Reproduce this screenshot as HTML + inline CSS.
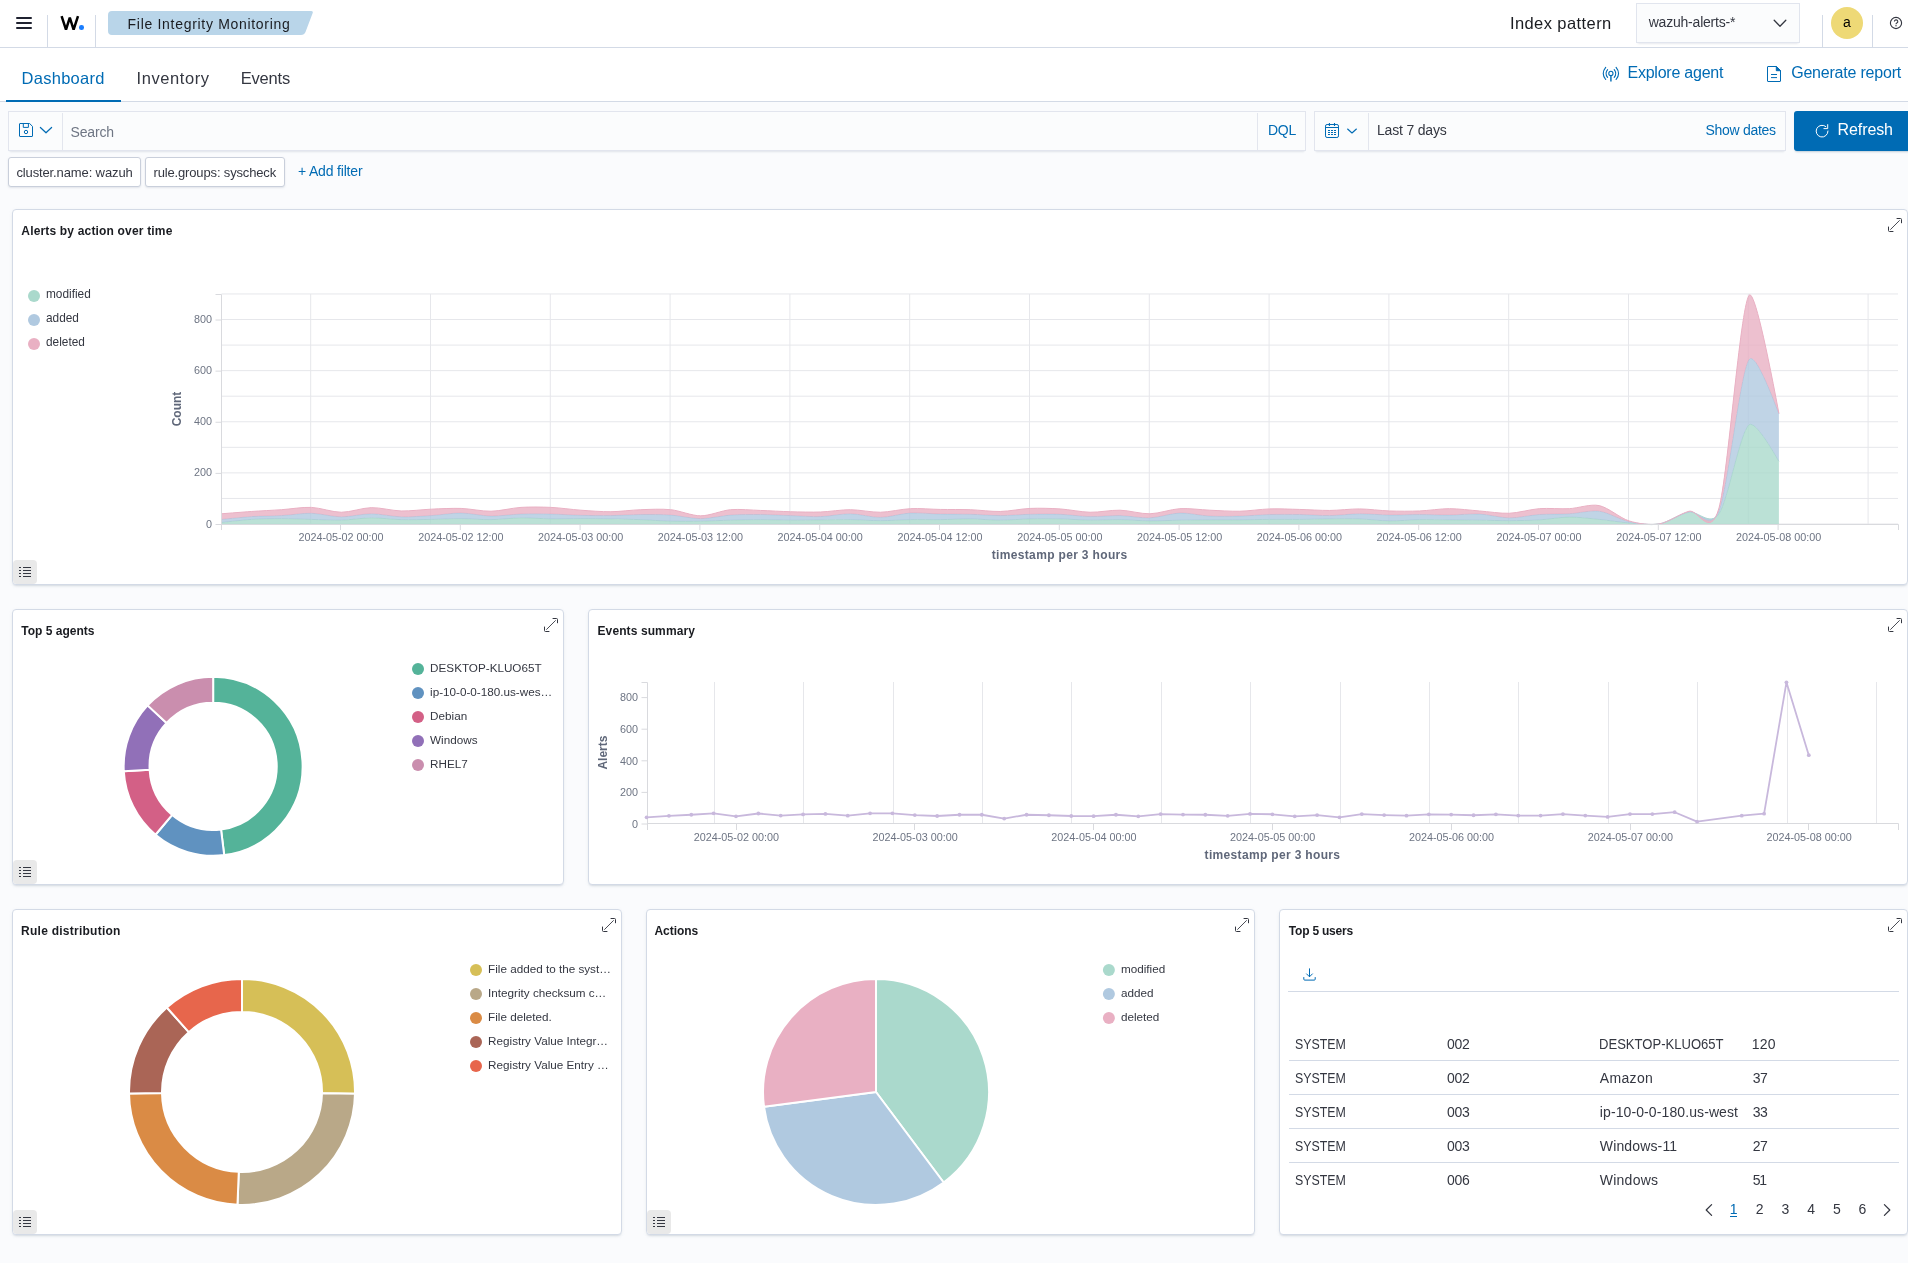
<!DOCTYPE html>
<html><head><meta charset="utf-8"><title>Wazuh</title><style>
*{box-sizing:border-box}
html,body{margin:0;padding:0}
body{width:1908px;height:1263px;overflow:hidden;background:#fafbfd;font-family:"Liberation Sans",sans-serif;position:relative}
#root{position:absolute;left:0;top:0;width:1908px;height:1263px;overflow:hidden;will-change:transform}
.t{position:absolute;line-height:20px;white-space:nowrap}
#hdr{position:absolute;left:0;top:0;width:1908px;height:48px;background:#fff;border-bottom:1px solid #d3dae6}
#tabs{position:absolute;left:0;top:48px;width:1908px;height:54px;background:#fff;border-bottom:1px solid #d3dae6}
.vl{position:absolute;width:1px;background:#d3dae6}
.vl2{position:absolute;width:1px;background:#e3e6ee}
.hl{position:absolute;height:1px;background:#d3dae6}
.fld{position:absolute;background:#fbfcfd;border:1px solid #e2e5ee;box-shadow:0 1px 1px -1px rgba(152,162,179,.2),0 3px 2px -2px rgba(152,162,179,.25)}
.pill{position:absolute;background:#fff;border:1px solid #c9cfdb;border-radius:3px;box-shadow:0 1px 2px rgba(152,162,179,.25)}
.pn{position:absolute;background:#fff;border:1px solid #d3dae6;border-radius:4px;box-shadow:0 2px 2px -1px rgba(152,162,179,.3),0 1px 5px -2px rgba(152,162,179,.3)}
</style></head><body>
<div id="root">
<div id="hdr"></div>
<div class="vl" style="left:47px;top:15px;height:32px"></div>
<div class="vl" style="left:95px;top:15px;height:32px"></div>
<div class="vl" style="left:1822px;top:15px;height:32px"></div>
<div class="vl" style="left:1872px;top:15px;height:32px"></div>
<div style="position:absolute;left:16px;top:17px;width:16px;height:2px;background:#1f2230;border-radius:1px"></div>
<div style="position:absolute;left:16px;top:22px;width:16px;height:2px;background:#1f2230;border-radius:1px"></div>
<div style="position:absolute;left:16px;top:27px;width:16px;height:2px;background:#1f2230;border-radius:1px"></div>
<svg style="position:absolute;left:59px;top:15px" width="22" height="16"><path d="M2.6,1.2 L7,14.6 L10.8,2.6 L14.6,14.6 L19,1.2" fill="none" stroke="#000" stroke-width="2.5" stroke-linejoin="miter" stroke-miterlimit="2"/></svg>
<div style="position:absolute;left:79.1px;top:25.4px;width:4.6px;height:4.6px;border-radius:50%;background:#1a7dfe"></div>
<svg style="position:absolute;left:108px;top:11px" width="206" height="24"><path d="M4,0 H203 Q205.5,0 204.6,2.2 L197.5,21 Q196.3,24 193,24 H4 Q0,24 0,20 V4 Q0,0 4,0 Z" fill="#b9d5e9"/></svg>
<div class="t" style="left:127.60px;top:14.00px;font-size:14px;font-weight:400;color:#1a1c21;letter-spacing:0.695px;">File Integrity Monitoring</div>
<div class="t" style="left:1509.90px;top:13.00px;font-size:16.5px;font-weight:400;color:#1a1c21;letter-spacing:0.422px;">Index pattern</div>
<div style="position:absolute;left:1636px;top:3px;width:164px;height:40px;box-sizing:border-box;background:#fbfcfd;border:1px solid #e1e5ee;box-shadow:0 1px 1px -1px rgba(152,162,179,.2),0 3px 2px -2px rgba(152,162,179,.2)"></div>
<div class="t" style="left:1648.70px;top:12.00px;font-size:14px;font-weight:400;color:#343741;letter-spacing:-0.210px;">wazuh-alerts-*</div>
<svg style="position:absolute;left:1772px;top:18px" width="16" height="11"><path d="M2.2,2.3 L8,8.2 L13.8,2.3" fill="none" stroke="#343741" stroke-width="1.3" stroke-linecap="round" stroke-linejoin="round"/></svg>
<div style="position:absolute;left:1830.8px;top:7px;width:32px;height:32px;border-radius:50%;background:#eed976"></div>
<div class="t" style="left:1843.10px;top:12.00px;font-size:14px;font-weight:400;color:#000;letter-spacing:-0.700px;">a</div>
<svg style="position:absolute;left:1888px;top:15px" width="16" height="16" viewBox="0 0 16 16"><circle cx="8" cy="8" r="5.6" fill="none" stroke="#343741" stroke-width="1.15"/><path d="M6.4,6.5 a1.7,1.7 0 1 1 2.4,1.6 q-.8,.4 -.8,1.1" fill="none" stroke="#343741" stroke-width="1.1"/><circle cx="8" cy="10.8" r=".7" fill="#343741"/></svg>
<div id="tabs"></div>
<div style="position:absolute;left:6px;top:100px;width:115px;height:2px;background:#006bb4"></div>
<div class="t" style="left:21.50px;top:68.00px;font-size:16.5px;font-weight:400;color:#006bb4;letter-spacing:0.282px;">Dashboard</div>
<div class="t" style="left:136.50px;top:68.00px;font-size:16.5px;font-weight:400;color:#343741;letter-spacing:0.573px;">Inventory</div>
<div class="t" style="left:240.70px;top:68.00px;font-size:16.5px;font-weight:400;color:#343741;letter-spacing:-0.179px;">Events</div>
<svg style="position:absolute;left:1602px;top:66px" width="18" height="17" viewBox="0 0 18 17" fill="none" stroke="#006bb4" stroke-width="1.1" stroke-linecap="round">
<circle cx="8.9" cy="7.4" r="2.1"/><path d="M8.9,9.6 V15.4" stroke-width="1.8" stroke-opacity=".8" stroke-linecap="butt"/>
<path d="M5.6,3.6 Q2.4,7.4 5.6,11.3"/><path d="M12.2,3.6 Q15.4,7.4 12.2,11.3"/>
<path d="M3.7,1.4 Q-1.2,7.4 3.7,13.5"/><path d="M14.1,1.4 Q19,7.4 14.1,13.5"/></svg>
<div class="t" style="left:1627.50px;top:63.00px;font-size:16px;font-weight:400;color:#006bb4;letter-spacing:-0.232px;">Explore agent</div>
<svg style="position:absolute;left:1767px;top:66px" width="14" height="16" viewBox="0 0 14 16" fill="none" stroke="#006bb4" stroke-width="1">
<path d="M1,.5 H9.3 L13.5,4.7 V15 a.5,.5 0 0 1 -.5,.5 H1 a.5,.5 0 0 1 -.5,-.5 V1 a.5,.5 0 0 1 .5,-.5 Z"/><path d="M9.3,.5 V4.7 H13.5 Z" fill="#006bb4"/><path d="M4,8.5 H10 M4,11.6 H10"/></svg>
<div class="t" style="left:1791.20px;top:63.00px;font-size:16px;font-weight:400;color:#006bb4;letter-spacing:-0.208px;">Generate report</div>
<div class="fld" style="left:8px;top:111px;width:1298px;height:40px"></div>
<div class="vl2" style="left:62px;top:113px;height:37px"></div>
<div class="vl2" style="left:1257px;top:113px;height:37px"></div>
<svg style="position:absolute;left:19px;top:123px" width="14" height="14" viewBox="0 0 14 14" fill="none" stroke="#006bb4" stroke-width="1">
<path d="M1,.5 H10.6 L13.5,3.4 V13 a.5,.5 0 0 1 -.5,.5 H1 a.5,.5 0 0 1 -.5,-.5 V1 a.5,.5 0 0 1 .5,-.5 Z"/><path d="M4.3,.5 V4.4 H9.4 V.5"/><circle cx="7" cy="9" r="1.7"/></svg>
<svg style="position:absolute;left:39px;top:125px" width="14" height="10"><path d="M1.4,2.5 L7,7.8 L12.6,2.5" fill="none" stroke="#006bb4" stroke-width="1.2" stroke-linecap="round" stroke-linejoin="round"/></svg>
<div class="t" style="left:70.50px;top:122.00px;font-size:14px;font-weight:400;color:#6f7684;letter-spacing:-0.174px;">Search</div>
<div class="t" style="left:1268.00px;top:120.00px;font-size:14px;font-weight:400;color:#006bb4;letter-spacing:-0.300px;">DQL</div>
<div class="fld" style="left:1314px;top:111px;width:472px;height:40px"></div>
<div class="vl2" style="left:1368px;top:113px;height:37px"></div>
<svg style="position:absolute;left:1325px;top:123px" width="14" height="15" viewBox="0 0 14 15" fill="none" stroke="#006bb4" stroke-width="1">
<rect x=".5" y="1.5" width="13" height="13" rx="1.6"/><path d="M.5,4.5 H13.5"/><path d="M4.4,0 V3 M9.5,0 V3" stroke-width="1.1"/>
<path d="M3,7.5 H5 M6,7.5 H8 M9,7.5 H11 M3,9.5 H5 M6,9.5 H8 M9,9.5 H11 M3,11.5 H5 M6,11.5 H8 M9,11.5 H11" stroke-width="1"/></svg>
<svg style="position:absolute;left:1346px;top:127px" width="12" height="8"><path d="M1.6,2 L6,6 L10.4,2" fill="none" stroke="#006bb4" stroke-width="1.1" stroke-linecap="round" stroke-linejoin="round"/></svg>
<div class="t" style="left:1377.00px;top:120.00px;font-size:14px;font-weight:400;color:#343741;letter-spacing:-0.180px;">Last 7 days</div>
<div class="t" style="left:1705.50px;top:120.00px;font-size:14px;font-weight:400;color:#006bb4;letter-spacing:-0.295px;">Show dates</div>
<div style="position:absolute;left:1794px;top:111px;width:120px;height:40px;border-radius:3px;background:#006bb4;box-shadow:0 2px 2px -1px rgba(54,97,126,.3)"></div>
<svg style="position:absolute;left:1815px;top:123px" width="15" height="15" viewBox="0 0 15 15" fill="none" stroke="#fff" stroke-width="1" stroke-linecap="round" stroke-linejoin="round">
<path d="M10.9,3.6 A5.9,5.9 0 1 0 13,8"/><path d="M12.7,1.6 V5.6 H8.9"/></svg>
<div class="t" style="left:1837.60px;top:120.00px;font-size:16px;font-weight:400;color:#fff;letter-spacing:-0.104px;">Refresh</div>
<div class="pill" style="left:8px;top:157px;width:133px;height:30px"></div>
<div class="pill" style="left:145px;top:157px;width:140px;height:30px"></div>
<div class="t" style="left:16.40px;top:163.00px;font-size:13px;font-weight:400;color:#343741;letter-spacing:-0.121px;">cluster.name: wazuh</div>
<div class="t" style="left:153.50px;top:163.00px;font-size:13px;font-weight:400;color:#343741;letter-spacing:-0.151px;">rule.groups: syscheck</div>
<div class="t" style="left:298.00px;top:161.00px;font-size:14px;font-weight:400;color:#006bb4;letter-spacing:-0.177px;">+ Add filter</div>
<div class="pn" style="left:12px;top:209px;width:1896px;height:376px"></div>
<div class="pn" style="left:12px;top:609px;width:552px;height:276px"></div>
<div class="pn" style="left:588px;top:609px;width:1320px;height:276px"></div>
<div class="pn" style="left:12px;top:909px;width:610px;height:326px"></div>
<div class="pn" style="left:646px;top:909px;width:609px;height:326px"></div>
<div class="pn" style="left:1279px;top:909px;width:629px;height:326px"></div>
<svg style="position:absolute;left:1888px;top:218px" width="14" height="14" viewBox="0 0 14 14" fill="none" stroke="#343741" stroke-linecap="round">
<path d="M9,.5 H12.5 a1,1 0 0 1 1,1 V4.8" stroke-width="1"/><path d="M.5,9 V12.5 a1,1 0 0 0 1,1 H5" stroke-width="1"/><path d="M2.6,11.4 L11.4,2.6" stroke-width=".9"/></svg>
<svg style="position:absolute;left:544px;top:618px" width="14" height="14" viewBox="0 0 14 14" fill="none" stroke="#343741" stroke-linecap="round">
<path d="M9,.5 H12.5 a1,1 0 0 1 1,1 V4.8" stroke-width="1"/><path d="M.5,9 V12.5 a1,1 0 0 0 1,1 H5" stroke-width="1"/><path d="M2.6,11.4 L11.4,2.6" stroke-width=".9"/></svg>
<svg style="position:absolute;left:1888px;top:618px" width="14" height="14" viewBox="0 0 14 14" fill="none" stroke="#343741" stroke-linecap="round">
<path d="M9,.5 H12.5 a1,1 0 0 1 1,1 V4.8" stroke-width="1"/><path d="M.5,9 V12.5 a1,1 0 0 0 1,1 H5" stroke-width="1"/><path d="M2.6,11.4 L11.4,2.6" stroke-width=".9"/></svg>
<svg style="position:absolute;left:602px;top:918px" width="14" height="14" viewBox="0 0 14 14" fill="none" stroke="#343741" stroke-linecap="round">
<path d="M9,.5 H12.5 a1,1 0 0 1 1,1 V4.8" stroke-width="1"/><path d="M.5,9 V12.5 a1,1 0 0 0 1,1 H5" stroke-width="1"/><path d="M2.6,11.4 L11.4,2.6" stroke-width=".9"/></svg>
<svg style="position:absolute;left:1235px;top:918px" width="14" height="14" viewBox="0 0 14 14" fill="none" stroke="#343741" stroke-linecap="round">
<path d="M9,.5 H12.5 a1,1 0 0 1 1,1 V4.8" stroke-width="1"/><path d="M.5,9 V12.5 a1,1 0 0 0 1,1 H5" stroke-width="1"/><path d="M2.6,11.4 L11.4,2.6" stroke-width=".9"/></svg>
<svg style="position:absolute;left:1888px;top:918px" width="14" height="14" viewBox="0 0 14 14" fill="none" stroke="#343741" stroke-linecap="round">
<path d="M9,.5 H12.5 a1,1 0 0 1 1,1 V4.8" stroke-width="1"/><path d="M.5,9 V12.5 a1,1 0 0 0 1,1 H5" stroke-width="1"/><path d="M2.6,11.4 L11.4,2.6" stroke-width=".9"/></svg>
<div style="position:absolute;left:13px;top:560.2px;width:23.7px;height:24px;border-radius:4px;background:#e9e9e9"></div>
<div style="position:absolute;left:19px;top:567px;width:2px;height:1px;background:#343741"></div>
<div style="position:absolute;left:23px;top:567px;width:8px;height:1px;background:#343741"></div>
<div style="position:absolute;left:19px;top:570px;width:2px;height:1px;background:#343741"></div>
<div style="position:absolute;left:23px;top:570px;width:8px;height:1px;background:#343741"></div>
<div style="position:absolute;left:19px;top:573px;width:2px;height:1px;background:#343741"></div>
<div style="position:absolute;left:23px;top:573px;width:8px;height:1px;background:#343741"></div>
<div style="position:absolute;left:19px;top:576px;width:2px;height:1px;background:#343741"></div>
<div style="position:absolute;left:23px;top:576px;width:8px;height:1px;background:#343741"></div>
<div style="position:absolute;left:13px;top:860.2px;width:23.7px;height:24px;border-radius:4px;background:#e9e9e9"></div>
<div style="position:absolute;left:19px;top:867px;width:2px;height:1px;background:#343741"></div>
<div style="position:absolute;left:23px;top:867px;width:8px;height:1px;background:#343741"></div>
<div style="position:absolute;left:19px;top:870px;width:2px;height:1px;background:#343741"></div>
<div style="position:absolute;left:23px;top:870px;width:8px;height:1px;background:#343741"></div>
<div style="position:absolute;left:19px;top:873px;width:2px;height:1px;background:#343741"></div>
<div style="position:absolute;left:23px;top:873px;width:8px;height:1px;background:#343741"></div>
<div style="position:absolute;left:19px;top:876px;width:2px;height:1px;background:#343741"></div>
<div style="position:absolute;left:23px;top:876px;width:8px;height:1px;background:#343741"></div>
<div style="position:absolute;left:13px;top:1210.2px;width:23.7px;height:24px;border-radius:4px;background:#e9e9e9"></div>
<div style="position:absolute;left:19px;top:1217px;width:2px;height:1px;background:#343741"></div>
<div style="position:absolute;left:23px;top:1217px;width:8px;height:1px;background:#343741"></div>
<div style="position:absolute;left:19px;top:1220px;width:2px;height:1px;background:#343741"></div>
<div style="position:absolute;left:23px;top:1220px;width:8px;height:1px;background:#343741"></div>
<div style="position:absolute;left:19px;top:1223px;width:2px;height:1px;background:#343741"></div>
<div style="position:absolute;left:23px;top:1223px;width:8px;height:1px;background:#343741"></div>
<div style="position:absolute;left:19px;top:1226px;width:2px;height:1px;background:#343741"></div>
<div style="position:absolute;left:23px;top:1226px;width:8px;height:1px;background:#343741"></div>
<div style="position:absolute;left:647px;top:1210.2px;width:23.7px;height:24px;border-radius:4px;background:#e9e9e9"></div>
<div style="position:absolute;left:653px;top:1217px;width:2px;height:1px;background:#343741"></div>
<div style="position:absolute;left:657px;top:1217px;width:8px;height:1px;background:#343741"></div>
<div style="position:absolute;left:653px;top:1220px;width:2px;height:1px;background:#343741"></div>
<div style="position:absolute;left:657px;top:1220px;width:8px;height:1px;background:#343741"></div>
<div style="position:absolute;left:653px;top:1223px;width:2px;height:1px;background:#343741"></div>
<div style="position:absolute;left:657px;top:1223px;width:8px;height:1px;background:#343741"></div>
<div style="position:absolute;left:653px;top:1226px;width:2px;height:1px;background:#343741"></div>
<div style="position:absolute;left:657px;top:1226px;width:8px;height:1px;background:#343741"></div>
<div class="t" style="left:21.30px;top:221.00px;font-size:12px;font-weight:700;color:#1a1c21;letter-spacing:0.174px;">Alerts by action over time</div>
<div class="t" style="left:21.30px;top:621.00px;font-size:12px;font-weight:700;color:#1a1c21;letter-spacing:0.005px;">Top 5 agents</div>
<div class="t" style="left:597.50px;top:621.00px;font-size:12px;font-weight:700;color:#1a1c21;letter-spacing:0.102px;">Events summary</div>
<div class="t" style="left:21.10px;top:921.00px;font-size:12px;font-weight:700;color:#1a1c21;letter-spacing:0.250px;">Rule distribution</div>
<div class="t" style="left:654.50px;top:921.00px;font-size:12px;font-weight:700;color:#1a1c21;letter-spacing:-0.055px;">Actions</div>
<div class="t" style="left:1288.80px;top:921.00px;font-size:12px;font-weight:700;color:#1a1c21;letter-spacing:-0.209px;">Top 5 users</div>
<svg style="position:absolute;left:0;top:0" width="1908" height="1263" font-family="Liberation Sans, sans-serif">
<line x1="221.5" x2="1898" y1="524.00" y2="524.00" stroke="#e6e7eb" stroke-width="1"/>
<line x1="221.5" x2="1898" y1="498.44" y2="498.44" stroke="#e6e7eb" stroke-width="1"/>
<line x1="221.5" x2="1898" y1="472.88" y2="472.88" stroke="#e6e7eb" stroke-width="1"/>
<line x1="221.5" x2="1898" y1="447.32" y2="447.32" stroke="#e6e7eb" stroke-width="1"/>
<line x1="221.5" x2="1898" y1="421.76" y2="421.76" stroke="#e6e7eb" stroke-width="1"/>
<line x1="221.5" x2="1898" y1="396.20" y2="396.20" stroke="#e6e7eb" stroke-width="1"/>
<line x1="221.5" x2="1898" y1="370.64" y2="370.64" stroke="#e6e7eb" stroke-width="1"/>
<line x1="221.5" x2="1898" y1="345.08" y2="345.08" stroke="#e6e7eb" stroke-width="1"/>
<line x1="221.5" x2="1898" y1="319.52" y2="319.52" stroke="#e6e7eb" stroke-width="1"/>
<line x1="221.5" x2="1898" y1="293.96" y2="293.96" stroke="#e6e7eb" stroke-width="1"/>
<line x1="310.70" x2="310.70" y1="294" y2="524" stroke="#e6e7eb" stroke-width="1"/>
<line x1="430.50" x2="430.50" y1="294" y2="524" stroke="#e6e7eb" stroke-width="1"/>
<line x1="550.30" x2="550.30" y1="294" y2="524" stroke="#e6e7eb" stroke-width="1"/>
<line x1="670.10" x2="670.10" y1="294" y2="524" stroke="#e6e7eb" stroke-width="1"/>
<line x1="789.90" x2="789.90" y1="294" y2="524" stroke="#e6e7eb" stroke-width="1"/>
<line x1="909.70" x2="909.70" y1="294" y2="524" stroke="#e6e7eb" stroke-width="1"/>
<line x1="1029.50" x2="1029.50" y1="294" y2="524" stroke="#e6e7eb" stroke-width="1"/>
<line x1="1149.30" x2="1149.30" y1="294" y2="524" stroke="#e6e7eb" stroke-width="1"/>
<line x1="1269.10" x2="1269.10" y1="294" y2="524" stroke="#e6e7eb" stroke-width="1"/>
<line x1="1388.90" x2="1388.90" y1="294" y2="524" stroke="#e6e7eb" stroke-width="1"/>
<line x1="1508.70" x2="1508.70" y1="294" y2="524" stroke="#e6e7eb" stroke-width="1"/>
<line x1="1628.50" x2="1628.50" y1="294" y2="524" stroke="#e6e7eb" stroke-width="1"/>
<line x1="1748.30" x2="1748.30" y1="294" y2="524" stroke="#e6e7eb" stroke-width="1"/>
<line x1="1868.10" x2="1868.10" y1="294" y2="524" stroke="#e6e7eb" stroke-width="1"/>
<path d="M221.50,522.47Q245.46,519.78,251.45,519.40C260.44,518.82,272.41,518.63,281.40,518.63S302.37,519.17,311.35,519.40S332.31,520.40,341.30,520.17S362.26,517.94,371.25,517.87S392.21,519.42,401.20,519.65S422.16,519.55,431.15,519.40S452.12,518.59,461.10,518.63S482.06,519.77,491.05,519.65S512.01,517.98,521.00,517.87S541.97,518.77,550.95,518.89S571.91,518.63,580.90,518.63S601.86,518.73,610.85,518.89S631.81,519.31,640.80,519.65S661.76,520.96,670.75,521.19S691.72,521.34,700.70,521.19S721.66,520.40,730.65,520.17S751.62,519.65,760.60,519.65S781.56,520.13,790.55,520.17S811.51,519.99,820.50,519.91S841.46,519.54,850.45,519.65S871.41,520.68,880.40,520.68S901.37,519.81,910.35,519.65S931.31,519.77,940.30,519.65S961.26,518.81,970.25,518.89S991.21,520.17,1000.20,520.17S1021.17,519.08,1030.15,518.89S1051.12,518.70,1060.10,518.89S1081.06,520.05,1090.05,520.17S1111.02,519.54,1120.00,519.65S1140.96,520.86,1149.95,520.93S1170.91,520.32,1179.90,520.17S1200.87,519.95,1209.85,519.91S1230.81,519.99,1239.80,519.91S1260.76,519.48,1269.75,519.40S1290.72,519.48,1299.70,519.40S1320.66,518.96,1329.65,518.89S1350.61,518.58,1359.60,518.89S1380.56,520.82,1389.55,520.93S1410.51,519.81,1419.50,519.65S1440.47,519.83,1449.45,519.91S1470.41,520.05,1479.40,520.17S1500.36,520.72,1509.35,520.68S1530.31,520.45,1539.30,519.91S1560.26,517.18,1569.25,517.10S1590.22,518.52,1599.20,519.40S1620.16,522.29,1629.15,522.98S1650.11,525.61,1659.10,524.00S1680.06,513.78,1689.05,512.24S1710.01,526.89,1719.00,513.78S1739.97,432.69,1748.95,424.83Q1754.94,419.59,1778.90,461.38L1778.90,524.00Q1754.94,524.00,1748.95,524.00C1739.97,524.00,1727.99,524.00,1719.00,524.00S1698.04,524.00,1689.05,524.00S1668.09,524.00,1659.10,524.00S1638.13,524.00,1629.15,524.00S1608.18,524.00,1599.20,524.00S1578.24,524.00,1569.25,524.00S1548.29,524.00,1539.30,524.00S1518.34,524.00,1509.35,524.00S1488.38,524.00,1479.40,524.00S1458.43,524.00,1449.45,524.00S1428.49,524.00,1419.50,524.00S1398.54,524.00,1389.55,524.00S1368.59,524.00,1359.60,524.00S1338.63,524.00,1329.65,524.00S1308.68,524.00,1299.70,524.00S1278.74,524.00,1269.75,524.00S1248.79,524.00,1239.80,524.00S1218.83,524.00,1209.85,524.00S1188.89,524.00,1179.90,524.00S1158.93,524.00,1149.95,524.00S1128.98,524.00,1120.00,524.00S1099.04,524.00,1090.05,524.00S1069.08,524.00,1060.10,524.00S1039.13,524.00,1030.15,524.00S1009.18,524.00,1000.20,524.00S979.24,524.00,970.25,524.00S949.28,524.00,940.30,524.00S919.34,524.00,910.35,524.00S889.38,524.00,880.40,524.00S859.43,524.00,850.45,524.00S829.49,524.00,820.50,524.00S799.53,524.00,790.55,524.00S769.59,524.00,760.60,524.00S739.63,524.00,730.65,524.00S709.69,524.00,700.70,524.00S679.74,524.00,670.75,524.00S649.78,524.00,640.80,524.00S619.83,524.00,610.85,524.00S589.88,524.00,580.90,524.00S559.94,524.00,550.95,524.00S529.99,524.00,521.00,524.00S500.04,524.00,491.05,524.00S470.09,524.00,461.10,524.00S440.13,524.00,431.15,524.00S410.19,524.00,401.20,524.00S380.24,524.00,371.25,524.00S350.29,524.00,341.30,524.00S320.34,524.00,311.35,524.00S290.38,524.00,281.40,524.00S260.44,524.00,251.45,524.00Q245.46,524.00,221.50,524.00Z" fill="#aad9cc" fill-opacity=".8" stroke="none"/>
<path d="M221.50,522.47Q245.46,519.78,251.45,519.40C260.44,518.82,272.41,518.63,281.40,518.63S302.37,519.17,311.35,519.40S332.31,520.40,341.30,520.17S362.26,517.94,371.25,517.87S392.21,519.42,401.20,519.65S422.16,519.55,431.15,519.40S452.12,518.59,461.10,518.63S482.06,519.77,491.05,519.65S512.01,517.98,521.00,517.87S541.97,518.77,550.95,518.89S571.91,518.63,580.90,518.63S601.86,518.73,610.85,518.89S631.81,519.31,640.80,519.65S661.76,520.96,670.75,521.19S691.72,521.34,700.70,521.19S721.66,520.40,730.65,520.17S751.62,519.65,760.60,519.65S781.56,520.13,790.55,520.17S811.51,519.99,820.50,519.91S841.46,519.54,850.45,519.65S871.41,520.68,880.40,520.68S901.37,519.81,910.35,519.65S931.31,519.77,940.30,519.65S961.26,518.81,970.25,518.89S991.21,520.17,1000.20,520.17S1021.17,519.08,1030.15,518.89S1051.12,518.70,1060.10,518.89S1081.06,520.05,1090.05,520.17S1111.02,519.54,1120.00,519.65S1140.96,520.86,1149.95,520.93S1170.91,520.32,1179.90,520.17S1200.87,519.95,1209.85,519.91S1230.81,519.99,1239.80,519.91S1260.76,519.48,1269.75,519.40S1290.72,519.48,1299.70,519.40S1320.66,518.96,1329.65,518.89S1350.61,518.58,1359.60,518.89S1380.56,520.82,1389.55,520.93S1410.51,519.81,1419.50,519.65S1440.47,519.83,1449.45,519.91S1470.41,520.05,1479.40,520.17S1500.36,520.72,1509.35,520.68S1530.31,520.45,1539.30,519.91S1560.26,517.18,1569.25,517.10S1590.22,518.52,1599.20,519.40S1620.16,522.29,1629.15,522.98S1650.11,525.61,1659.10,524.00S1680.06,513.78,1689.05,512.24S1710.01,526.89,1719.00,513.78S1739.97,432.69,1748.95,424.83Q1754.94,419.59,1778.90,461.38" fill="none" stroke="#aad9cc" stroke-width="1"/>
<path d="M221.50,519.40Q245.46,516.97,251.45,516.59C260.44,516.01,272.41,516.06,281.40,515.57S302.37,513.07,311.35,513.26S332.31,516.77,341.30,516.84S362.26,513.78,371.25,513.78S392.21,516.57,401.20,516.84S422.16,516.14,431.15,515.57S452.12,512.93,461.10,513.01S482.06,515.92,491.05,516.08S512.01,514.34,521.00,514.03S541.97,513.84,550.95,514.03S571.91,515.08,580.90,515.31S601.86,515.68,610.85,515.57S631.81,514.62,640.80,514.54S661.76,514.44,670.75,515.05S691.72,518.63,700.70,518.63S721.66,515.67,730.65,515.05S751.62,514.47,760.60,514.54S781.56,515.26,790.55,515.57S811.51,516.86,820.50,516.59S841.46,513.66,850.45,513.78S871.41,517.47,880.40,517.35S901.37,513.51,910.35,513.01S931.31,513.84,940.30,514.03S961.26,514.06,970.25,514.29S991.21,515.57,1000.20,515.57S1021.17,514.48,1030.15,514.29S1051.12,513.94,1060.10,514.29S1081.06,516.40,1090.05,516.59S1111.02,515.37,1120.00,515.57S1140.96,518.25,1149.95,517.87S1170.91,513.28,1179.90,513.01S1200.87,515.62,1209.85,516.08S1230.81,516.31,1239.80,516.08S1260.76,514.77,1269.75,514.54S1290.72,514.39,1299.70,514.54S1320.66,515.68,1329.65,515.57S1350.61,513.85,1359.60,513.78S1380.56,514.94,1389.55,515.05S1410.51,514.54,1419.50,514.54S1440.47,515.13,1449.45,515.05S1470.41,513.61,1479.40,514.03S1500.36,517.79,1509.35,517.87S1530.31,515.16,1539.30,514.54S1560.26,514.27,1569.25,513.78S1590.22,510.03,1599.20,511.22S1620.16,519.78,1629.15,521.70S1650.11,525.50,1659.10,524.00S1680.06,513.72,1689.05,511.73S1710.01,533.52,1719.00,510.71S1739.97,374.18,1748.95,359.65Q1754.94,349.96,1778.90,413.84L1778.90,461.38Q1754.94,419.59,1748.95,424.83C1739.97,432.69,1727.99,500.66,1719.00,513.78S1698.04,510.71,1689.05,512.24S1668.09,522.39,1659.10,524.00S1638.13,523.67,1629.15,522.98S1608.18,520.28,1599.20,519.40S1578.24,517.02,1569.25,517.10S1548.29,519.37,1539.30,519.91S1518.34,520.64,1509.35,520.68S1488.38,520.28,1479.40,520.17S1458.43,519.99,1449.45,519.91S1428.49,519.50,1419.50,519.65S1398.54,521.05,1389.55,520.93S1368.59,519.19,1359.60,518.89S1338.63,518.81,1329.65,518.89S1308.68,519.32,1299.70,519.40S1278.74,519.32,1269.75,519.40S1248.79,519.83,1239.80,519.91S1218.83,519.87,1209.85,519.91S1188.89,520.01,1179.90,520.17S1158.93,521.01,1149.95,520.93S1128.98,519.77,1120.00,519.65S1099.04,520.28,1090.05,520.17S1069.08,519.08,1060.10,518.89S1039.13,518.70,1030.15,518.89S1009.18,520.17,1000.20,520.17S979.24,518.96,970.25,518.89S949.28,519.54,940.30,519.65S919.34,519.50,910.35,519.65S889.38,520.68,880.40,520.68S859.43,519.77,850.45,519.65S829.49,519.83,820.50,519.91S799.53,520.20,790.55,520.17S769.59,519.65,760.60,519.65S739.63,519.94,730.65,520.17S709.69,521.04,700.70,521.19S679.74,521.42,670.75,521.19S649.78,520.00,640.80,519.65S619.83,519.04,610.85,518.89S589.88,518.63,580.90,518.63S559.94,519.00,550.95,518.89S529.99,517.75,521.00,517.87S500.04,519.54,491.05,519.65S470.09,518.67,461.10,518.63S440.13,519.25,431.15,519.40S410.19,519.88,401.20,519.65S380.24,517.79,371.25,517.87S350.29,519.94,341.30,520.17S320.34,519.63,311.35,519.40S290.38,518.63,281.40,518.63S260.44,518.82,251.45,519.40Q245.46,519.78,221.50,522.47Z" fill="#b0c9e0" fill-opacity=".8" stroke="none"/>
<path d="M221.50,519.40Q245.46,516.97,251.45,516.59C260.44,516.01,272.41,516.06,281.40,515.57S302.37,513.07,311.35,513.26S332.31,516.77,341.30,516.84S362.26,513.78,371.25,513.78S392.21,516.57,401.20,516.84S422.16,516.14,431.15,515.57S452.12,512.93,461.10,513.01S482.06,515.92,491.05,516.08S512.01,514.34,521.00,514.03S541.97,513.84,550.95,514.03S571.91,515.08,580.90,515.31S601.86,515.68,610.85,515.57S631.81,514.62,640.80,514.54S661.76,514.44,670.75,515.05S691.72,518.63,700.70,518.63S721.66,515.67,730.65,515.05S751.62,514.47,760.60,514.54S781.56,515.26,790.55,515.57S811.51,516.86,820.50,516.59S841.46,513.66,850.45,513.78S871.41,517.47,880.40,517.35S901.37,513.51,910.35,513.01S931.31,513.84,940.30,514.03S961.26,514.06,970.25,514.29S991.21,515.57,1000.20,515.57S1021.17,514.48,1030.15,514.29S1051.12,513.94,1060.10,514.29S1081.06,516.40,1090.05,516.59S1111.02,515.37,1120.00,515.57S1140.96,518.25,1149.95,517.87S1170.91,513.28,1179.90,513.01S1200.87,515.62,1209.85,516.08S1230.81,516.31,1239.80,516.08S1260.76,514.77,1269.75,514.54S1290.72,514.39,1299.70,514.54S1320.66,515.68,1329.65,515.57S1350.61,513.85,1359.60,513.78S1380.56,514.94,1389.55,515.05S1410.51,514.54,1419.50,514.54S1440.47,515.13,1449.45,515.05S1470.41,513.61,1479.40,514.03S1500.36,517.79,1509.35,517.87S1530.31,515.16,1539.30,514.54S1560.26,514.27,1569.25,513.78S1590.22,510.03,1599.20,511.22S1620.16,519.78,1629.15,521.70S1650.11,525.50,1659.10,524.00S1680.06,513.72,1689.05,511.73S1710.01,533.52,1719.00,510.71S1739.97,374.18,1748.95,359.65Q1754.94,349.96,1778.90,413.84" fill="none" stroke="#b0c9e0" stroke-width="1"/>
<path d="M221.50,513.78Q245.46,511.88,251.45,511.48C260.44,510.86,272.41,510.30,281.40,509.69S302.37,507.00,311.35,507.39S332.31,512.20,341.30,512.24S362.26,507.83,371.25,507.64S392.21,510.73,401.20,510.96S422.16,509.56,431.15,509.18S452.12,508.10,461.10,508.41S482.06,511.37,491.05,511.22S512.01,507.96,521.00,507.39S541.97,506.96,550.95,507.39S571.91,509.55,580.90,510.20S601.86,511.81,610.85,511.73S631.81,509.99,640.80,509.69S661.76,508.77,670.75,509.69S691.72,515.82,700.70,515.82S721.66,510.49,730.65,509.69S751.62,510.15,760.60,510.45S781.56,511.50,790.55,511.73S811.51,512.29,820.50,511.99S841.46,509.65,850.45,509.69S871.41,512.40,880.40,512.24S901.37,509.09,910.35,508.66S931.31,509.28,940.30,509.43S961.26,509.38,970.25,509.69S991.21,511.67,1000.20,511.48S1021.17,508.79,1030.15,508.41S1051.12,508.34,1060.10,508.92S1081.06,512.05,1090.05,512.24S1111.02,509.97,1120.00,510.20S1140.96,514.01,1149.95,513.78S1170.91,509.20,1179.90,508.66S1200.87,509.81,1209.85,510.20S1230.81,511.41,1239.80,511.22S1260.76,509.19,1269.75,508.92S1290.72,509.20,1299.70,509.43S1320.66,510.53,1329.65,510.45S1350.61,508.84,1359.60,508.92S1380.56,510.66,1389.55,510.96S1410.51,511.31,1419.50,510.96S1440.47,508.66,1449.45,508.66S1470.41,510.27,1479.40,510.96S1500.36,513.61,1509.35,513.26S1530.31,509.35,1539.30,508.66S1560.26,509.12,1569.25,508.66S1590.22,503.76,1599.20,505.60S1620.16,518.17,1629.15,520.93S1650.11,525.46,1659.10,524.00S1680.06,513.64,1689.05,511.22S1710.01,540.26,1719.00,507.90S1739.97,309.68,1748.95,295.49Q1754.94,286.04,1778.90,413.33L1778.90,413.84Q1754.94,349.96,1748.95,359.65C1739.97,374.18,1727.99,487.90,1719.00,510.71S1698.04,509.74,1689.05,511.73S1668.09,522.50,1659.10,524.00S1638.13,523.62,1629.15,521.70S1608.18,512.41,1599.20,511.22S1578.24,513.28,1569.25,513.78S1548.29,513.93,1539.30,514.54S1518.34,517.94,1509.35,517.87S1488.38,514.45,1479.40,514.03S1458.43,514.98,1449.45,515.05S1428.49,514.54,1419.50,514.54S1398.54,515.17,1389.55,515.05S1368.59,513.70,1359.60,513.78S1338.63,515.45,1329.65,515.57S1308.68,514.70,1299.70,514.54S1278.74,514.31,1269.75,514.54S1248.79,515.85,1239.80,516.08S1218.83,516.54,1209.85,516.08S1188.89,512.74,1179.90,513.01S1158.93,517.48,1149.95,517.87S1128.98,515.76,1120.00,515.57S1099.04,516.78,1090.05,516.59S1069.08,514.63,1060.10,514.29S1039.13,514.10,1030.15,514.29S1009.18,515.57,1000.20,515.57S979.24,514.52,970.25,514.29S949.28,514.22,940.30,514.03S919.34,512.51,910.35,513.01S889.38,517.24,880.40,517.35S859.43,513.89,850.45,513.78S829.49,516.32,820.50,516.59S799.53,515.87,790.55,515.57S769.59,514.62,760.60,514.54S739.63,514.44,730.65,515.05S709.69,518.63,700.70,518.63S679.74,515.67,670.75,515.05S649.78,514.47,640.80,514.54S619.83,515.45,610.85,515.57S589.88,515.54,580.90,515.31S559.94,514.22,550.95,514.03S529.99,513.72,521.00,514.03S500.04,516.23,491.05,516.08S470.09,513.09,461.10,513.01S440.13,514.99,431.15,515.57S410.19,517.11,401.20,516.84S380.24,513.78,371.25,513.78S350.29,516.92,341.30,516.84S320.34,513.46,311.35,513.26S290.38,515.07,281.40,515.57S260.44,516.01,251.45,516.59Q245.46,516.97,221.50,519.40Z" fill="#e9b0c3" fill-opacity=".8" stroke="none"/>
<path d="M221.50,513.78Q245.46,511.88,251.45,511.48C260.44,510.86,272.41,510.30,281.40,509.69S302.37,507.00,311.35,507.39S332.31,512.20,341.30,512.24S362.26,507.83,371.25,507.64S392.21,510.73,401.20,510.96S422.16,509.56,431.15,509.18S452.12,508.10,461.10,508.41S482.06,511.37,491.05,511.22S512.01,507.96,521.00,507.39S541.97,506.96,550.95,507.39S571.91,509.55,580.90,510.20S601.86,511.81,610.85,511.73S631.81,509.99,640.80,509.69S661.76,508.77,670.75,509.69S691.72,515.82,700.70,515.82S721.66,510.49,730.65,509.69S751.62,510.15,760.60,510.45S781.56,511.50,790.55,511.73S811.51,512.29,820.50,511.99S841.46,509.65,850.45,509.69S871.41,512.40,880.40,512.24S901.37,509.09,910.35,508.66S931.31,509.28,940.30,509.43S961.26,509.38,970.25,509.69S991.21,511.67,1000.20,511.48S1021.17,508.79,1030.15,508.41S1051.12,508.34,1060.10,508.92S1081.06,512.05,1090.05,512.24S1111.02,509.97,1120.00,510.20S1140.96,514.01,1149.95,513.78S1170.91,509.20,1179.90,508.66S1200.87,509.81,1209.85,510.20S1230.81,511.41,1239.80,511.22S1260.76,509.19,1269.75,508.92S1290.72,509.20,1299.70,509.43S1320.66,510.53,1329.65,510.45S1350.61,508.84,1359.60,508.92S1380.56,510.66,1389.55,510.96S1410.51,511.31,1419.50,510.96S1440.47,508.66,1449.45,508.66S1470.41,510.27,1479.40,510.96S1500.36,513.61,1509.35,513.26S1530.31,509.35,1539.30,508.66S1560.26,509.12,1569.25,508.66S1590.22,503.76,1599.20,505.60S1620.16,518.17,1629.15,520.93S1650.11,525.46,1659.10,524.00S1680.06,513.64,1689.05,511.22S1710.01,540.26,1719.00,507.90S1739.97,309.68,1748.95,295.49Q1754.94,286.04,1778.90,413.33" fill="none" stroke="#e9b0c3" stroke-width="1"/>
<path d="M215.5,294.5 H221.5 V530" fill="none" stroke="#d9dade" stroke-width="1"/>
<path d="M221.5,524.5 H1898.5 V530" fill="none" stroke="#d9dade" stroke-width="1"/>
<line x1="215.5" x2="221.5" y1="524.50" y2="524.50" stroke="#d9dade"/>
<text x="212" y="527.60" text-anchor="end" font-size="10.8" fill="#6d7483">0</text>
<line x1="215.5" x2="221.5" y1="473.38" y2="473.38" stroke="#d9dade"/>
<text x="212" y="476.48" text-anchor="end" font-size="10.8" fill="#6d7483">200</text>
<line x1="215.5" x2="221.5" y1="422.26" y2="422.26" stroke="#d9dade"/>
<text x="212" y="425.36" text-anchor="end" font-size="10.8" fill="#6d7483">400</text>
<line x1="215.5" x2="221.5" y1="371.14" y2="371.14" stroke="#d9dade"/>
<text x="212" y="374.24" text-anchor="end" font-size="10.8" fill="#6d7483">600</text>
<line x1="215.5" x2="221.5" y1="320.02" y2="320.02" stroke="#d9dade"/>
<text x="212" y="323.12" text-anchor="end" font-size="10.8" fill="#6d7483">800</text>
<line x1="340.50" x2="340.50" y1="524" y2="530" stroke="#d9dade"/>
<text x="341.00" y="541" text-anchor="middle" font-size="10.8" fill="#6d7483">2024-05-02 00:00</text>
<line x1="460.30" x2="460.30" y1="524" y2="530" stroke="#d9dade"/>
<text x="460.80" y="541" text-anchor="middle" font-size="10.8" fill="#6d7483">2024-05-02 12:00</text>
<line x1="580.10" x2="580.10" y1="524" y2="530" stroke="#d9dade"/>
<text x="580.60" y="541" text-anchor="middle" font-size="10.8" fill="#6d7483">2024-05-03 00:00</text>
<line x1="699.90" x2="699.90" y1="524" y2="530" stroke="#d9dade"/>
<text x="700.40" y="541" text-anchor="middle" font-size="10.8" fill="#6d7483">2024-05-03 12:00</text>
<line x1="819.70" x2="819.70" y1="524" y2="530" stroke="#d9dade"/>
<text x="820.20" y="541" text-anchor="middle" font-size="10.8" fill="#6d7483">2024-05-04 00:00</text>
<line x1="939.50" x2="939.50" y1="524" y2="530" stroke="#d9dade"/>
<text x="940.00" y="541" text-anchor="middle" font-size="10.8" fill="#6d7483">2024-05-04 12:00</text>
<line x1="1059.30" x2="1059.30" y1="524" y2="530" stroke="#d9dade"/>
<text x="1059.80" y="541" text-anchor="middle" font-size="10.8" fill="#6d7483">2024-05-05 00:00</text>
<line x1="1179.10" x2="1179.10" y1="524" y2="530" stroke="#d9dade"/>
<text x="1179.60" y="541" text-anchor="middle" font-size="10.8" fill="#6d7483">2024-05-05 12:00</text>
<line x1="1298.90" x2="1298.90" y1="524" y2="530" stroke="#d9dade"/>
<text x="1299.40" y="541" text-anchor="middle" font-size="10.8" fill="#6d7483">2024-05-06 00:00</text>
<line x1="1418.70" x2="1418.70" y1="524" y2="530" stroke="#d9dade"/>
<text x="1419.20" y="541" text-anchor="middle" font-size="10.8" fill="#6d7483">2024-05-06 12:00</text>
<line x1="1538.50" x2="1538.50" y1="524" y2="530" stroke="#d9dade"/>
<text x="1539.00" y="541" text-anchor="middle" font-size="10.8" fill="#6d7483">2024-05-07 00:00</text>
<line x1="1658.30" x2="1658.30" y1="524" y2="530" stroke="#d9dade"/>
<text x="1658.80" y="541" text-anchor="middle" font-size="10.8" fill="#6d7483">2024-05-07 12:00</text>
<line x1="1778.10" x2="1778.10" y1="524" y2="530" stroke="#d9dade"/>
<text x="1778.60" y="541" text-anchor="middle" font-size="10.8" fill="#6d7483">2024-05-08 00:00</text>
<text x="1059.5" y="559" text-anchor="middle" font-size="12" font-weight="700" fill="#5f6779" textLength="135.5">timestamp per 3 hours</text>
<text transform="translate(181,409) rotate(-90)" text-anchor="middle" font-size="12" font-weight="700" fill="#5f6779">Count</text>
<circle cx="34" cy="296" r="6" fill="#aad9cc"/>
<text x="46" y="298.0" font-size="11.85" fill="#343741">modified</text>
<circle cx="34" cy="320" r="6" fill="#b0c9e0"/>
<text x="46" y="322.0" font-size="11.85" fill="#343741">added</text>
<circle cx="34" cy="344" r="6" fill="#e9b0c3"/>
<text x="46" y="346.0" font-size="11.85" fill="#343741">deleted</text>
<line x1="714.50" x2="714.50" y1="682" y2="823.5" stroke="#e6e7eb" stroke-width="1"/>
<line x1="803.50" x2="803.50" y1="682" y2="823.5" stroke="#e6e7eb" stroke-width="1"/>
<line x1="893.50" x2="893.50" y1="682" y2="823.5" stroke="#e6e7eb" stroke-width="1"/>
<line x1="982.50" x2="982.50" y1="682" y2="823.5" stroke="#e6e7eb" stroke-width="1"/>
<line x1="1071.50" x2="1071.50" y1="682" y2="823.5" stroke="#e6e7eb" stroke-width="1"/>
<line x1="1161.50" x2="1161.50" y1="682" y2="823.5" stroke="#e6e7eb" stroke-width="1"/>
<line x1="1250.50" x2="1250.50" y1="682" y2="823.5" stroke="#e6e7eb" stroke-width="1"/>
<line x1="1340.50" x2="1340.50" y1="682" y2="823.5" stroke="#e6e7eb" stroke-width="1"/>
<line x1="1429.50" x2="1429.50" y1="682" y2="823.5" stroke="#e6e7eb" stroke-width="1"/>
<line x1="1518.50" x2="1518.50" y1="682" y2="823.5" stroke="#e6e7eb" stroke-width="1"/>
<line x1="1608.50" x2="1608.50" y1="682" y2="823.5" stroke="#e6e7eb" stroke-width="1"/>
<line x1="1697.50" x2="1697.50" y1="682" y2="823.5" stroke="#e6e7eb" stroke-width="1"/>
<line x1="1787.50" x2="1787.50" y1="682" y2="823.5" stroke="#e6e7eb" stroke-width="1"/>
<line x1="1876.50" x2="1876.50" y1="682" y2="823.5" stroke="#e6e7eb" stroke-width="1"/>
<path d="M641.5,682.5 H647.5 V830" fill="none" stroke="#d9dade"/>
<path d="M647.5,823.5 H1898.5 V830" fill="none" stroke="#d9dade"/>
<line x1="641.5" x2="647.5" y1="824.00" y2="824.00" stroke="#d9dade"/>
<text x="638" y="827.80" text-anchor="end" font-size="10.8" fill="#6d7483">0</text>
<line x1="641.5" x2="647.5" y1="792.40" y2="792.40" stroke="#d9dade"/>
<text x="638" y="796.20" text-anchor="end" font-size="10.8" fill="#6d7483">200</text>
<line x1="641.5" x2="647.5" y1="760.80" y2="760.80" stroke="#d9dade"/>
<text x="638" y="764.60" text-anchor="end" font-size="10.8" fill="#6d7483">400</text>
<line x1="641.5" x2="647.5" y1="729.20" y2="729.20" stroke="#d9dade"/>
<text x="638" y="733.00" text-anchor="end" font-size="10.8" fill="#6d7483">600</text>
<line x1="641.5" x2="647.5" y1="697.60" y2="697.60" stroke="#d9dade"/>
<text x="638" y="701.40" text-anchor="end" font-size="10.8" fill="#6d7483">800</text>
<line x1="736.50" x2="736.50" y1="824" y2="830" stroke="#d9dade"/>
<text x="736.30" y="840.8" text-anchor="middle" font-size="10.8" fill="#6d7483">2024-05-02 00:00</text>
<line x1="914.50" x2="914.50" y1="824" y2="830" stroke="#d9dade"/>
<text x="915.10" y="840.8" text-anchor="middle" font-size="10.8" fill="#6d7483">2024-05-03 00:00</text>
<line x1="1093.50" x2="1093.50" y1="824" y2="830" stroke="#d9dade"/>
<text x="1093.90" y="840.8" text-anchor="middle" font-size="10.8" fill="#6d7483">2024-05-04 00:00</text>
<line x1="1272.50" x2="1272.50" y1="824" y2="830" stroke="#d9dade"/>
<text x="1272.70" y="840.8" text-anchor="middle" font-size="10.8" fill="#6d7483">2024-05-05 00:00</text>
<line x1="1451.50" x2="1451.50" y1="824" y2="830" stroke="#d9dade"/>
<text x="1451.50" y="840.8" text-anchor="middle" font-size="10.8" fill="#6d7483">2024-05-06 00:00</text>
<line x1="1630.50" x2="1630.50" y1="824" y2="830" stroke="#d9dade"/>
<text x="1630.30" y="840.8" text-anchor="middle" font-size="10.8" fill="#6d7483">2024-05-07 00:00</text>
<line x1="1808.50" x2="1808.50" y1="824" y2="830" stroke="#d9dade"/>
<text x="1809.10" y="840.8" text-anchor="middle" font-size="10.8" fill="#6d7483">2024-05-08 00:00</text>
<text x="1272.3" y="859" text-anchor="middle" font-size="12" font-weight="700" fill="#5f6779" textLength="135.5">timestamp per 3 hours</text>
<text transform="translate(606.5,752.6) rotate(-90)" text-anchor="middle" font-size="12" font-weight="700" fill="#5f6779">Alerts</text>
<polyline points="646.60,817.28 668.95,815.86 691.30,814.75 713.65,813.33 736.00,816.33 758.35,813.49 780.70,815.54 803.05,814.44 825.40,813.96 847.75,815.70 870.10,813.33 892.45,813.33 914.80,815.07 937.15,816.02 959.50,814.75 981.85,814.75 1004.20,818.54 1026.55,814.75 1048.90,815.23 1071.25,816.02 1093.60,816.17 1115.95,814.75 1138.30,816.33 1160.65,814.12 1183.00,814.59 1205.35,814.75 1227.70,815.86 1250.05,813.96 1272.40,814.28 1294.75,816.33 1317.10,815.07 1339.45,817.28 1361.80,814.12 1384.15,815.07 1406.50,815.70 1428.85,814.28 1451.20,814.59 1473.55,815.23 1495.90,814.28 1518.25,815.54 1540.60,815.54 1562.95,814.12 1585.30,815.54 1607.65,816.96 1630.00,814.12 1652.35,814.12 1674.70,812.22 1697.05,821.70 1741.75,815.70 1764.10,813.65 1786.45,682.35 1808.80,755.19" fill="none" stroke="#c8b8dc" stroke-width="1.8" stroke-linejoin="round"/>
<circle cx="646.60" cy="817.28" r="1.9" fill="#c8b8dc"/>
<circle cx="668.95" cy="815.86" r="1.9" fill="#c8b8dc"/>
<circle cx="691.30" cy="814.75" r="1.9" fill="#c8b8dc"/>
<circle cx="713.65" cy="813.33" r="1.9" fill="#c8b8dc"/>
<circle cx="736.00" cy="816.33" r="1.9" fill="#c8b8dc"/>
<circle cx="758.35" cy="813.49" r="1.9" fill="#c8b8dc"/>
<circle cx="780.70" cy="815.54" r="1.9" fill="#c8b8dc"/>
<circle cx="803.05" cy="814.44" r="1.9" fill="#c8b8dc"/>
<circle cx="825.40" cy="813.96" r="1.9" fill="#c8b8dc"/>
<circle cx="847.75" cy="815.70" r="1.9" fill="#c8b8dc"/>
<circle cx="870.10" cy="813.33" r="1.9" fill="#c8b8dc"/>
<circle cx="892.45" cy="813.33" r="1.9" fill="#c8b8dc"/>
<circle cx="914.80" cy="815.07" r="1.9" fill="#c8b8dc"/>
<circle cx="937.15" cy="816.02" r="1.9" fill="#c8b8dc"/>
<circle cx="959.50" cy="814.75" r="1.9" fill="#c8b8dc"/>
<circle cx="981.85" cy="814.75" r="1.9" fill="#c8b8dc"/>
<circle cx="1004.20" cy="818.54" r="1.9" fill="#c8b8dc"/>
<circle cx="1026.55" cy="814.75" r="1.9" fill="#c8b8dc"/>
<circle cx="1048.90" cy="815.23" r="1.9" fill="#c8b8dc"/>
<circle cx="1071.25" cy="816.02" r="1.9" fill="#c8b8dc"/>
<circle cx="1093.60" cy="816.17" r="1.9" fill="#c8b8dc"/>
<circle cx="1115.95" cy="814.75" r="1.9" fill="#c8b8dc"/>
<circle cx="1138.30" cy="816.33" r="1.9" fill="#c8b8dc"/>
<circle cx="1160.65" cy="814.12" r="1.9" fill="#c8b8dc"/>
<circle cx="1183.00" cy="814.59" r="1.9" fill="#c8b8dc"/>
<circle cx="1205.35" cy="814.75" r="1.9" fill="#c8b8dc"/>
<circle cx="1227.70" cy="815.86" r="1.9" fill="#c8b8dc"/>
<circle cx="1250.05" cy="813.96" r="1.9" fill="#c8b8dc"/>
<circle cx="1272.40" cy="814.28" r="1.9" fill="#c8b8dc"/>
<circle cx="1294.75" cy="816.33" r="1.9" fill="#c8b8dc"/>
<circle cx="1317.10" cy="815.07" r="1.9" fill="#c8b8dc"/>
<circle cx="1339.45" cy="817.28" r="1.9" fill="#c8b8dc"/>
<circle cx="1361.80" cy="814.12" r="1.9" fill="#c8b8dc"/>
<circle cx="1384.15" cy="815.07" r="1.9" fill="#c8b8dc"/>
<circle cx="1406.50" cy="815.70" r="1.9" fill="#c8b8dc"/>
<circle cx="1428.85" cy="814.28" r="1.9" fill="#c8b8dc"/>
<circle cx="1451.20" cy="814.59" r="1.9" fill="#c8b8dc"/>
<circle cx="1473.55" cy="815.23" r="1.9" fill="#c8b8dc"/>
<circle cx="1495.90" cy="814.28" r="1.9" fill="#c8b8dc"/>
<circle cx="1518.25" cy="815.54" r="1.9" fill="#c8b8dc"/>
<circle cx="1540.60" cy="815.54" r="1.9" fill="#c8b8dc"/>
<circle cx="1562.95" cy="814.12" r="1.9" fill="#c8b8dc"/>
<circle cx="1585.30" cy="815.54" r="1.9" fill="#c8b8dc"/>
<circle cx="1607.65" cy="816.96" r="1.9" fill="#c8b8dc"/>
<circle cx="1630.00" cy="814.12" r="1.9" fill="#c8b8dc"/>
<circle cx="1652.35" cy="814.12" r="1.9" fill="#c8b8dc"/>
<circle cx="1674.70" cy="812.22" r="1.9" fill="#c8b8dc"/>
<circle cx="1697.05" cy="821.70" r="1.9" fill="#c8b8dc"/>
<circle cx="1741.75" cy="815.70" r="1.9" fill="#c8b8dc"/>
<circle cx="1764.10" cy="813.65" r="1.9" fill="#c8b8dc"/>
<circle cx="1786.45" cy="682.35" r="1.9" fill="#c8b8dc"/>
<circle cx="1808.80" cy="755.19" r="1.9" fill="#c8b8dc"/>
<path d="M213.15,676.80 A89.50,89.50 0 0 1 224.21,855.11 L221.01,829.41 A63.60,63.60 0 0 0 213.15,702.70 Z" fill="#54b399" stroke="#fff" stroke-width="2" stroke-linejoin="round"/>
<path d="M224.21,855.11 A89.50,89.50 0 0 1 155.50,834.76 L172.18,814.95 A63.60,63.60 0 0 0 221.01,829.41 Z" fill="#6092c0" stroke="#fff" stroke-width="2" stroke-linejoin="round"/>
<path d="M155.50,834.76 A89.50,89.50 0 0 1 123.79,771.30 L149.65,769.85 A63.60,63.60 0 0 0 172.18,814.95 Z" fill="#d36086" stroke="#fff" stroke-width="2" stroke-linejoin="round"/>
<path d="M123.79,771.30 A89.50,89.50 0 0 1 147.59,705.38 L166.56,723.01 A63.60,63.60 0 0 0 149.65,769.85 Z" fill="#9170b8" stroke="#fff" stroke-width="2" stroke-linejoin="round"/>
<path d="M147.59,705.38 A89.50,89.50 0 0 1 213.15,676.80 L213.15,702.70 A63.60,63.60 0 0 0 166.56,723.01 Z" fill="#ca8eae" stroke="#fff" stroke-width="2" stroke-linejoin="round"/>
<circle cx="418.0" cy="669.0" r="6" fill="#54b399"/>
<text x="430.1" y="672.0" font-size="11.7" fill="#343741">DESKTOP-KLUO65T</text>
<circle cx="418.0" cy="693.0" r="6" fill="#6092c0"/>
<text x="430.1" y="696.0" font-size="11.7" fill="#343741">ip-10-0-0-180.us-wes…</text>
<circle cx="418.0" cy="717.0" r="6" fill="#d36086"/>
<text x="430.1" y="720.0" font-size="11.7" fill="#343741">Debian</text>
<circle cx="418.0" cy="741.0" r="6" fill="#9170b8"/>
<text x="430.1" y="744.0" font-size="11.7" fill="#343741">Windows</text>
<circle cx="418.0" cy="765.0" r="6" fill="#ca8eae"/>
<text x="430.1" y="768.0" font-size="11.7" fill="#343741">RHEL7</text>
<path d="M242.00,978.90 A113.00,113.00 0 0 1 354.98,1093.87 L321.99,1093.30 A80.00,80.00 0 0 0 242.00,1011.90 Z" fill="#d6bf57" stroke="#fff" stroke-width="2" stroke-linejoin="round"/>
<path d="M354.98,1093.87 A113.00,113.00 0 0 1 237.47,1204.81 L238.79,1171.84 A80.00,80.00 0 0 0 321.99,1093.30 Z" fill="#b9a888" stroke="#fff" stroke-width="2" stroke-linejoin="round"/>
<path d="M237.47,1204.81 A113.00,113.00 0 0 1 129.01,1093.48 L162.01,1093.02 A80.00,80.00 0 0 0 238.79,1171.84 Z" fill="#da8b45" stroke="#fff" stroke-width="2" stroke-linejoin="round"/>
<path d="M129.01,1093.48 A113.00,113.00 0 0 1 166.83,1007.53 L188.78,1032.17 A80.00,80.00 0 0 0 162.01,1093.02 Z" fill="#aa6556" stroke="#fff" stroke-width="2" stroke-linejoin="round"/>
<path d="M166.83,1007.53 A113.00,113.00 0 0 1 242.00,978.90 L242.00,1011.90 A80.00,80.00 0 0 0 188.78,1032.17 Z" fill="#e7664c" stroke="#fff" stroke-width="2" stroke-linejoin="round"/>
<circle cx="476.0" cy="970.0" r="6" fill="#d6bf57"/>
<text x="488.1" y="973.0" font-size="11.7" fill="#343741">File added to the syst…</text>
<circle cx="476.0" cy="994.0" r="6" fill="#b9a888"/>
<text x="488.1" y="997.0" font-size="11.7" fill="#343741">Integrity checksum c…</text>
<circle cx="476.0" cy="1018.0" r="6" fill="#da8b45"/>
<text x="488.1" y="1021.0" font-size="11.7" fill="#343741">File deleted.</text>
<circle cx="476.0" cy="1042.0" r="6" fill="#aa6556"/>
<text x="488.1" y="1045.0" font-size="11.7" fill="#343741">Registry Value Integr…</text>
<circle cx="476.0" cy="1066.0" r="6" fill="#e7664c"/>
<text x="488.1" y="1069.0" font-size="11.7" fill="#343741">Registry Value Entry …</text>
<path d="M876.00,979.00 A113.00,113.00 0 0 1 943.69,1182.48 L876.00,1092.00 Z" fill="#aad9cc" stroke="#fff" stroke-width="2" stroke-linejoin="round"/>
<path d="M943.69,1182.48 A113.00,113.00 0 0 1 763.97,1106.75 L876.00,1092.00 Z" fill="#b0c9e0" stroke="#fff" stroke-width="2" stroke-linejoin="round"/>
<path d="M763.97,1106.75 A113.00,113.00 0 0 1 876.00,979.00 L876.00,1092.00 Z" fill="#e9b0c3" stroke="#fff" stroke-width="2" stroke-linejoin="round"/>
<circle cx="1108.9" cy="970.0" r="6" fill="#aad9cc"/>
<text x="1121.0" y="973.0" font-size="11.7" fill="#343741">modified</text>
<circle cx="1108.9" cy="994.0" r="6" fill="#b0c9e0"/>
<text x="1121.0" y="997.0" font-size="11.7" fill="#343741">added</text>
<circle cx="1108.9" cy="1018.0" r="6" fill="#e9b0c3"/>
<text x="1121.0" y="1021.0" font-size="11.7" fill="#343741">deleted</text>
</svg>
<svg style="position:absolute;left:1303px;top:968px" width="13" height="13" viewBox="0 0 13 13" fill="none" stroke="#006bb4" stroke-width="1" stroke-linecap="round" stroke-linejoin="round"><path d="M6.5,.8 V8.6 M3.6,5.9 L6.5,8.8 L9.4,5.9"/><path d="M.8,9.5 V11.2 a.9,.9 0 0 0 .9,.9 H11.3 a.9,.9 0 0 0 .9,-.9 V9.5"/></svg>
<div class="hl" style="left:1288px;top:991px;width:611px"></div>
<div class="hl" style="left:1288.5px;top:1060.0px;width:610.5px"></div>
<div class="t" style="left:1295.20px;top:1034.00px;font-size:14px;font-weight:400;color:#343741;letter-spacing:0.000px;transform:scaleX(0.8840);transform-origin:0 0;">SYSTEM</div>
<div class="t" style="left:1447.00px;top:1034.00px;font-size:14px;font-weight:400;color:#343741;letter-spacing:-0.236px;">002</div>
<div class="t" style="left:1598.87px;top:1034.00px;font-size:14px;font-weight:400;color:#343741;letter-spacing:0.000px;transform:scaleX(0.9323);transform-origin:0 0;">DESKTOP-KLUO65T</div>
<div class="t" style="left:1751.80px;top:1034.00px;font-size:14px;font-weight:400;color:#343741;letter-spacing:0.214px;">120</div>
<div class="hl" style="left:1288.5px;top:1094.0px;width:610.5px"></div>
<div class="t" style="left:1295.20px;top:1068.00px;font-size:14px;font-weight:400;color:#343741;letter-spacing:0.000px;transform:scaleX(0.8840);transform-origin:0 0;">SYSTEM</div>
<div class="t" style="left:1447.00px;top:1068.00px;font-size:14px;font-weight:400;color:#343741;letter-spacing:-0.236px;">002</div>
<div class="t" style="left:1599.80px;top:1068.00px;font-size:14px;font-weight:400;color:#343741;letter-spacing:0.346px;">Amazon</div>
<div class="t" style="left:1752.80px;top:1068.00px;font-size:14px;font-weight:400;color:#343741;letter-spacing:-0.486px;">37</div>
<div class="hl" style="left:1288.5px;top:1128.0px;width:610.5px"></div>
<div class="t" style="left:1295.20px;top:1102.00px;font-size:14px;font-weight:400;color:#343741;letter-spacing:0.000px;transform:scaleX(0.8840);transform-origin:0 0;">SYSTEM</div>
<div class="t" style="left:1447.00px;top:1102.00px;font-size:14px;font-weight:400;color:#343741;letter-spacing:-0.236px;">003</div>
<div class="t" style="left:1599.80px;top:1102.00px;font-size:14px;font-weight:400;color:#343741;letter-spacing:0.101px;">ip-10-0-0-180.us-west</div>
<div class="t" style="left:1752.80px;top:1102.00px;font-size:14px;font-weight:400;color:#343741;letter-spacing:-0.486px;">33</div>
<div class="hl" style="left:1288.5px;top:1162.0px;width:610.5px"></div>
<div class="t" style="left:1295.20px;top:1136.00px;font-size:14px;font-weight:400;color:#343741;letter-spacing:0.000px;transform:scaleX(0.8840);transform-origin:0 0;">SYSTEM</div>
<div class="t" style="left:1447.00px;top:1136.00px;font-size:14px;font-weight:400;color:#343741;letter-spacing:-0.236px;">003</div>
<div class="t" style="left:1599.80px;top:1136.00px;font-size:14px;font-weight:400;color:#343741;letter-spacing:0.144px;">Windows-11</div>
<div class="t" style="left:1752.80px;top:1136.00px;font-size:14px;font-weight:400;color:#343741;letter-spacing:-0.486px;">27</div>
<div class="t" style="left:1295.20px;top:1170.00px;font-size:14px;font-weight:400;color:#343741;letter-spacing:0.000px;transform:scaleX(0.8840);transform-origin:0 0;">SYSTEM</div>
<div class="t" style="left:1447.00px;top:1170.00px;font-size:14px;font-weight:400;color:#343741;letter-spacing:-0.236px;">006</div>
<div class="t" style="left:1599.80px;top:1170.00px;font-size:14px;font-weight:400;color:#343741;letter-spacing:0.235px;">Windows</div>
<div class="t" style="left:1752.80px;top:1170.00px;font-size:14px;font-weight:400;color:#343741;letter-spacing:-1.286px;">51</div>
<svg style="position:absolute;left:1704px;top:1203px" width="10" height="14"><path d="M7.6,1.6 L2.2,7 L7.6,12.4" fill="none" stroke="#343741" stroke-width="1.2" stroke-linecap="round" stroke-linejoin="round"/></svg>
<svg style="position:absolute;left:1882px;top:1203px" width="10" height="14"><path d="M2.4,1.6 L7.8,7 L2.4,12.4" fill="none" stroke="#343741" stroke-width="1.2" stroke-linecap="round" stroke-linejoin="round"/></svg>
<div class="t" style="left:1729.70px;top:1199.00px;font-size:14px;font-weight:400;color:#006bb4;letter-spacing:0.000px;">1</div>
<div class="t" style="left:1755.80px;top:1199.00px;font-size:14px;font-weight:400;color:#343741;letter-spacing:0.000px;">2</div>
<div class="t" style="left:1781.50px;top:1199.00px;font-size:14px;font-weight:400;color:#343741;letter-spacing:0.000px;">3</div>
<div class="t" style="left:1807.30px;top:1199.00px;font-size:14px;font-weight:400;color:#343741;letter-spacing:0.000px;">4</div>
<div class="t" style="left:1832.90px;top:1199.00px;font-size:14px;font-weight:400;color:#343741;letter-spacing:0.000px;">5</div>
<div class="t" style="left:1858.50px;top:1199.00px;font-size:14px;font-weight:400;color:#343741;letter-spacing:0.000px;">6</div>
<div style="position:absolute;left:1730px;top:1216px;width:7px;height:1px;background:#006bb4"></div>
</div>
</body></html>
